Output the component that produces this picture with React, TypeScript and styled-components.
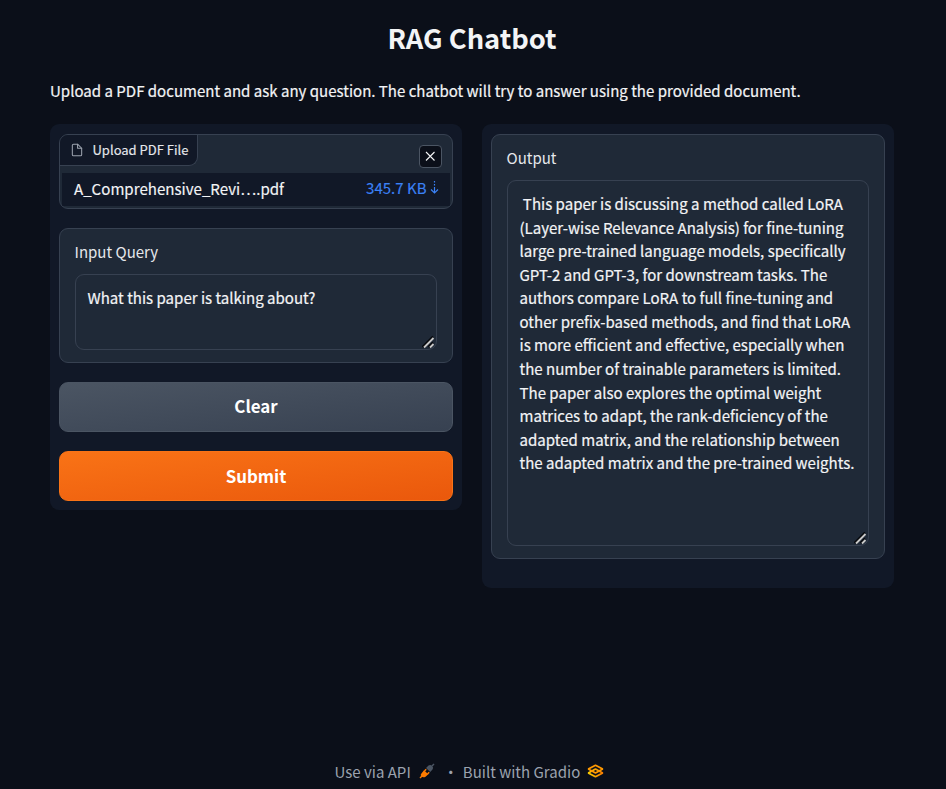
import React from "react";
import styled, { createGlobalStyle } from "styled-components";

const Global = createGlobalStyle`
  *{box-sizing:border-box}
  body{margin:0;background:#0b0f19;color:#f3f4f6;font-family:"Noto Sans CJK SC","Noto Sans",sans-serif;}
`;
const Page = styled.div`
  height:789px;padding:0 52px 0 50px;display:flex;flex-direction:column;overflow:hidden;
`;
const Title = styled.h1`
  margin:17px 0 0;height:40px;line-height:40px;text-align:center;font-size:27.3px;font-weight:700;color:#f3f4f6;white-space:nowrap;
`;
const Intro = styled.p`
  margin:22px 0 0;height:24px;line-height:24px;font-size:15.04px;color:#f3f4f6;white-space:nowrap;
  -webkit-text-stroke:0.2px currentColor;
`;
const Columns = styled.main`
  margin-top:21px;display:grid;grid-template-columns:412px 412px;gap:20px;align-items:start;
`;
const Panel = styled.section<{ $h: number }>`
  height:${(p) => p.$h}px;padding:10px 9px;border-radius:9px;background:#111827;display:flex;flex-direction:column;
`;
const Block = styled.div<{ $h: number }>`
  flex:none;height:${(p) => p.$h}px;border:1px solid #374151;border-radius:9px;background:#1f2937;padding:12px 15px;
`;
const FileBlock = styled(Block)`
  padding:0;display:flex;flex-direction:column;overflow:hidden;
`;
const FileHead = styled.div`
  display:flex;justify-content:space-between;height:38px;flex:none;
`;
const FileLabel = styled.div`
  width:138px;height:31px;border-right:1px solid #374151;border-bottom:1px solid #374151;border-radius:0 0 9px 0;
  background:#111827;display:flex;align-items:center;padding:0 0 1px 10px;gap:8.5px;font-size:13px;color:#e5e7eb;white-space:nowrap;
  -webkit-text-stroke:0.15px currentColor;
`;
const Close = styled.button`
  width:23px;height:23px;margin:10px 10px 0 0;padding:0;border:1px solid #4b5563;border-radius:4px;background:#0b0f19;
  color:#f3f4f6;display:flex;align-items:center;justify-content:center;
`;
const FileRow = styled.div`
  flex:none;height:33px;margin:0 2px;background:#111827;display:flex;justify-content:space-between;align-items:center;padding:0 11.5px 4px 12px;
  font-size:15.1px;line-height:22px;white-space:nowrap;-webkit-text-stroke:0.15px currentColor;
`;
const Link = styled.span`
  color:#3b82f6;display:flex;align-items:center;gap:3px;font-size:15px;
`;
const Label = styled.div`
  height:22px;line-height:22px;margin-left:-0.5px;font-size:15.03px;color:#e5e7eb;
`;
const Field = styled.div<{ $h: number }>`
  position:relative;margin-top:11px;height:${(p) => p.$h}px;border:1px solid #374151;border-radius:9px;padding:11.3px 11.5px;
  font-size:15.05px;line-height:23.53px;color:#f3f4f6;white-space:pre;-webkit-text-stroke:0.2px currentColor;
`;
const Grip = styled.svg`
  position:absolute;right:0;bottom:0;
`;
const Button = styled.button<{ $primary?: boolean }>`
  flex:none;height:50px;margin-top:19px;padding:0 0 ${(p) => (p.$primary ? 2 : 3)}px;border-radius:9px;font-family:inherit;font-size:16.9px;font-weight:700;color:#fff;
  border:1px solid ${(p) => (p.$primary ? "#f97316" : "#4b5563")};
  background:${(p) => (p.$primary ? "linear-gradient(to bottom right,#f97316,#ea580c)" : "linear-gradient(to bottom right,#4b5563,#374151)")};
`;
const Gap = styled.div`
  height:19px;flex:none;
`;
const Footer = styled.footer`
  margin-top:auto;height:34px;display:flex;align-items:center;padding:0 0 2px 284.5px;font-size:15.03px;color:#9ca3af;white-space:nowrap;
`;
const Dot = styled.span`
  width:24px;margin-left:3.5px;text-align:center;
`;
const PlugIcon = styled.svg`margin-left:8.5px;`;
const LogoIcon = styled.svg`margin-left:6.5px;`;

const Resize = () => (
  <Grip width="14" height="14" viewBox="0 0 14 14" fill="none">
    <path d="M0.5 12 11 1.5M6.5 12 11 7.5" stroke="#05070b" strokeWidth="2" />
    <path d="M2 12.5 11.5 3M8 12.5 11.5 9" stroke="#c8c8c8" strokeWidth="1.8" />
  </Grip>
);

const answer = [
  " This paper is discussing a method called LoRA",
  "(Layer-wise Relevance Analysis) for fine-tuning",
  "large pre-trained language models, specifically",
  "GPT-2 and GPT-3, for downstream tasks. The",
  "authors compare LoRA to full fine-tuning and",
  "other prefix-based methods, and find that LoRA",
  "is more efficient and effective, especially when",
  "the number of trainable parameters is limited.",
  "The paper also explores the optimal weight",
  "matrices to adapt, the rank-deficiency of the",
  "adapted matrix, and the relationship between",
  "the adapted matrix and the pre-trained weights.",
].join("\n");

export default function App() {
  return (
    <Page>
      <Global />
      <Title>RAG Chatbot</Title>
      <Intro>Upload a PDF document and ask any question. The chatbot will try to answer using the provided document.</Intro>
      <Columns>
        <Panel $h={386}>
          <FileBlock $h={75}>
            <FileHead>
              <FileLabel>
                <svg width="14" height="14" viewBox="0 0 24 24" fill="none" stroke="#9ca3af" strokeWidth="1.8" strokeLinecap="round" strokeLinejoin="round">
                  <path d="M13 2H6a2 2 0 0 0-2 2v16a2 2 0 0 0 2 2h12a2 2 0 0 0 2-2V9z" />
                  <path d="M13 2v7h7" />
                </svg>
                <span>Upload PDF File</span>
              </FileLabel>
              <Close aria-label="Remove file">
                <svg width="11" height="11" viewBox="0 0 11 11" stroke="currentColor" strokeWidth="1.1">
                  <path d="M1 1 9.500 9.500M9.500 1 1 9.500" />
                </svg>
              </Close>
            </FileHead>
            <FileRow>
              <span>A_Comprehensive_Revi….pdf</span>
              <Link>
                <span>345.7 KB</span>
                <svg width="9" height="13" viewBox="0 0 9 13" fill="none" stroke="currentColor" strokeWidth="1.2">
                  <path d="M4.500 0v1.500M4.500 3v1.500M4.500 6v6M1 8.500 4.500 12 8 8.500" />
                </svg>
              </Link>
            </FileRow>
          </FileBlock>
          <Gap />
          <Block $h={135}>
            <Label>Input Query</Label>
            <Field $h={76}>What this paper is talking about?<Resize /></Field>
          </Block>
          <Button>Clear</Button>
          <Button $primary>Submit</Button>
        </Panel>
        <Panel $h={464}>
          <Block $h={425}>
            <Label>Output</Label>
            <Field $h={366}>{answer}<Resize /></Field>
          </Block>
        </Panel>
      </Columns>
      <Footer>
        <span>Use via API</span>
        <PlugIcon width="16" height="16" viewBox="0 0 16 16">
          <path d="M1 15 3 13" stroke="#ff7c00" strokeWidth="1.4" />
          <path d="M2.400 10.400 5 7.200 9.300 11.200 6.500 13.800Q4.200 15 2.500 13.500T2.400 10.400Z" fill="#ff7c00" />
          <path d="M5.500 8 7.200 6.200M8.500 11 10.200 9.200" stroke="#ff7c00" strokeWidth="1.500" />
          <path d="M7 4.900 9.500 2.500Q11.500 1.300 13.200 3T13.500 6.500L11.200 9Z" fill="#4b5563" />
          <path d="M13 3 15 1" stroke="#4b5563" strokeWidth="1.400" />
        </PlugIcon>
        <Dot>·</Dot>
        <span>Built with Gradio</span>
        <LogoIcon width="17" height="14" viewBox="50 80 475 416" preserveAspectRatio="none" fill="none">
          <defs>
            <linearGradient id="lower" x1="60" y1="341" x2="520" y2="345" gradientUnits="userSpaceOnUse">
              <stop stopColor="#F9D100" /><stop offset="1" stopColor="#F97700" />
            </linearGradient>
          </defs>
          <path d="M287.500 229 86 344.500 287.500 460 489 344.500Z" stroke="url(#lower)" strokeWidth="50" strokeLinejoin="bevel" />
          <path d="M287.500 116 86 231.500 287.500 347 489 231.500Z" stroke="#FF9800" strokeWidth="50" strokeLinejoin="bevel" />
        </LogoIcon>
      </Footer>
    </Page>
  );
}
